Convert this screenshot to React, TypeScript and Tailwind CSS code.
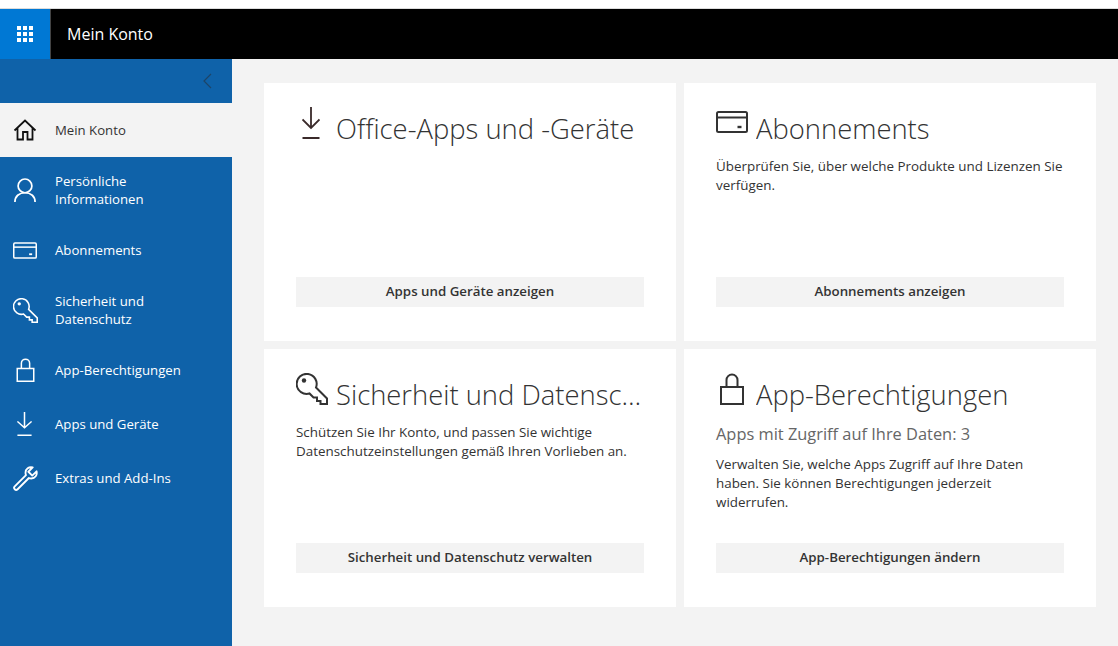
import type { ReactNode } from "react";

function HomeIcon({ className }: { className?: string }) {
  return (
    <svg viewBox="0 0 24 24" fill="none" stroke="currentColor" strokeWidth="1.8" className={className}>
      <path d="M1.500 12.500 12 2.500l10.500 10M4.500 10v11.500h5.500V14h4.500v7.500h5V10" />
    </svg>
  );
}

function UserIcon({ className }: { className?: string }) {
  return (
    <svg viewBox="0 0 24 26" fill="none" stroke="currentColor" strokeWidth="1.9" className={className}>
      <circle cx="12" cy="8.500" r="7.500" />
      <path d="M1 26c0-6 4.500-10 11-10s11 4 11 10" />
    </svg>
  );
}

function CardIcon({ className }: { className?: string }) {
  return (
    <svg viewBox="0 0 32 22" fill="none" stroke="currentColor" strokeWidth="2" className={className}>
      <rect x="1" y="1" width="30" height="20" rx="1.500" />
      <path d="M1 6.500h30" />
      <path d="M21.500 16h4" strokeWidth="2.400" />
    </svg>
  );
}

function KeyIcon({ className }: { className?: string }) {
  return (
    <svg viewBox="0 0 32 32" fill="none" stroke="currentColor" strokeWidth="2" className={className}>
      <path d="M20 14.500 31 25.500V31H24.500V28H21V24.500H17.500L13.500 20.500A10 10 0 1 1 20 14.500z" />
      <circle cx="8" cy="7.500" r="2.200" fill="currentColor" stroke="none" />
    </svg>
  );
}

function LockIcon({ className }: { className?: string }) {
  return (
    <svg viewBox="0 0 24 32" fill="none" stroke="currentColor" strokeWidth="2" className={className}>
      <rect x="1" y="14" width="22" height="17" />
      <path d="M6.500 14V7a5.500 5.500 0 0 1 11 0v7" />
    </svg>
  );
}

function DownloadIcon({ className }: { className?: string }) {
  return (
    <svg viewBox="0 0 18 32" preserveAspectRatio="none" fill="none" stroke="currentColor" strokeWidth="1.800" className={className}>
      <path d="M9 0v21M.5 12.500 9 21l8.500-8.500M.5 31h17" />
    </svg>
  );
}

function WrenchIcon({ className }: { className?: string }) {
  return (
    <svg viewBox="0 0 26 26" fill="none" stroke="currentColor" strokeWidth="1.900" strokeLinejoin="round" className={className}>
      <path d="M24.500 5.500 20 10l-4-4 4.500-4.500C16.500.5 13 3 13 7c0 1 .2 1.800.5 2.500L1.800 21.200a2.100 2.100 0 0 0 3 3L16.500 12.500c.7.300 1.500.5 2.500.5 4 0 6.500-3.500 5.500-7.500z" />
    </svg>
  );
}

function WaffleIcon() {
  return (
    <div className="grid grid-cols-3 gap-[2px] w-4 h-4">
      {Array.from({ length: 9 }).map((_, i) => (
        <div key={i} className="bg-white" />
      ))}
    </div>
  );
}

type NavProps = { icon: ReactNode; label: ReactNode; active?: boolean; tall?: boolean };

function NavItem({ icon, label, active, tall }: NavProps) {
  return (
    <div
      className={`flex items-center ${tall ? "h-[66px]" : "h-[54px]"} ${
        active ? "bg-[#f3f3f3] text-[#333333]" : "text-white"
      }`}
    >
      <div className="w-[55px] pl-[13px] shrink-0 flex items-center">{icon}</div>
      <div className="text-[13.2px] leading-[18px]">{label}</div>
    </div>
  );
}

type CardProps = { icon: ReactNode; title: string; action: string; children?: ReactNode };

function Card({ icon, title, action, children }: CardProps) {
  return (
    <div className="bg-white px-8 pt-5 pb-[34px] flex flex-col h-[258px] min-w-0">
      <div className="flex items-start h-[52px] shrink-0">
        <div className="w-10 shrink-0 flex items-end h-full pb-4">{icon}</div>
        <div className="text-[27.4px] leading-[52px] font-light text-[#333333] truncate">{title}</div>
      </div>
      <div className="flex-1 pt-[2px] text-[13.4px] leading-[19px] text-[#333333]">{children}</div>
      <button className="h-[30px] pb-px shrink-0 bg-[#f3f3f3] text-[13.3px] font-semibold text-[#333333]">{action}</button>
    </div>
  );
}

export default function App() {
  return (
    <div className="h-[646px] w-[1118px] overflow-hidden flex flex-col bg-white font-['Open_Sans',sans-serif]">
      <div className="h-[9px] shrink-0 border-b border-[#dcdcdc]" />
      <header className="h-[50px] shrink-0 flex items-center bg-black text-white">
        <div className="w-[51px] h-full bg-[#0078d4] border-r border-[#444444] flex items-center justify-center">
          <WaffleIcon />
        </div>
        <div className="pl-4 text-base">Mein Konto</div>
      </header>
      <div className="flex flex-1 min-h-0">
        <nav className="w-[232px] shrink-0 bg-[#0f62a9]">
          <div className="h-11 flex items-center justify-end pr-[20px]">
            <svg viewBox="0 0 9 16" fill="none" stroke="#1d4568" strokeWidth="1.200" className="w-[9px] h-4">
              <path d="M8 1 1 8l7 7" />
            </svg>
          </div>
          <NavItem active icon={<HomeIcon className="w-6 h-6 text-[#111111]" />} label="Mein Konto" />
          <NavItem tall icon={<UserIcon className="w-[22px] h-6 ml-[1px]" />} label={<>Persönliche<br />Informationen</>} />
          <NavItem icon={<CardIcon className="w-6 h-[17px]" />} label="Abonnements" />
          <NavItem tall icon={<KeyIcon className="w-[25px] h-[25px]" />} label={<>Sicherheit und<br />Datenschutz</>} />
          <NavItem icon={<LockIcon className="w-[19px] h-6 ml-[3px]" />} label="App-Berechtigungen" />
          <NavItem icon={<DownloadIcon className="w-[15px] h-6 ml-[4px]" />} label="Apps und Geräte" />
          <NavItem icon={<WrenchIcon className="w-[25px] h-[25px]" />} label="Extras und Add-Ins" />
        </nav>
        <main className="flex-1 bg-[#f3f3f3] pl-8 pr-[22px] pt-6">
          <div className="grid grid-cols-2 gap-2">
            <Card
              icon={<DownloadIcon className="w-[18px] h-8 ml-[6px] text-[#3a2a2a]" />}
              title="Office-Apps und -Geräte"
              action="Apps und Geräte anzeigen"
            />
            <Card
              icon={<CardIcon className="w-8 h-[22px] mb-[6px] text-[#333333]" />}
              title="Abonnements"
              action="Abonnements anzeigen"
            >
              Überprüfen Sie, über welche Produkte und Lizenzen Sie verfügen.
            </Card>
            <Card
              icon={<KeyIcon className="w-8 h-8 text-[#333333]" />}
              title="Sicherheit und Datenschutz"
              action="Sicherheit und Datenschutz verwalten"
            >
              Schützen Sie Ihr Konto, und passen Sie wichtige Datenschutzeinstellungen gemäß Ihren Vorlieben an.
            </Card>
            <Card
              icon={<LockIcon className="w-6 h-8 ml-[4px] text-[#333333]" />}
              title="App-Berechtigungen"
              action="App-Berechtigungen ändern"
            >
              <div className="text-[16.4px] leading-[22px] text-[#666666] mb-[10px]">Apps mit Zugriff auf Ihre Daten: 3</div>
              Verwalten Sie, welche Apps Zugriff auf Ihre Daten haben. Sie können Berechtigungen jederzeit widerrufen.
            </Card>
          </div>
        </main>
      </div>
    </div>
  );
}
